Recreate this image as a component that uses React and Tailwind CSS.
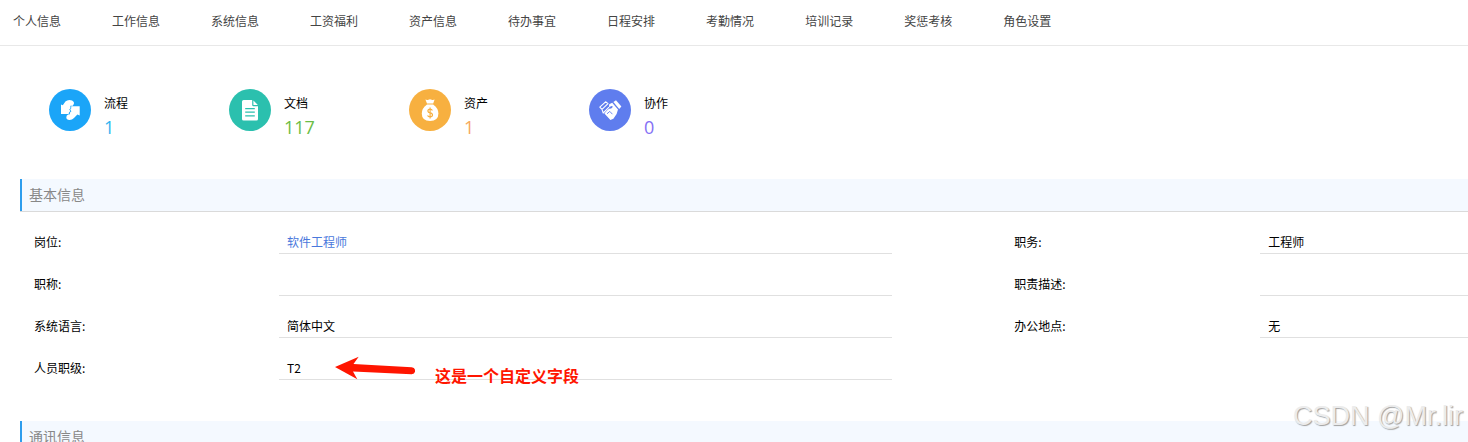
import React from 'react';

const navItems = [
  '个人信息',
  '工作信息',
  '系统信息',
  '工资福利',
  '资产信息',
  '待办事宜',
  '日程安排',
  '考勤情况',
  '培训记录',
  '奖惩考核',
  '角色设置',
];

const ProcessIcon = () => (
  <svg viewBox="0 0 42 42" className="size-full" fill="#fff">
    <path d="M12 25V15.6L13.8 16.2L16.4 12.6Q18 11 20.4 11Q23.6 11 24.8 13Q25.6 14.8 23.8 16.8L21.4 16.8V19.4L20.2 20.6L21.4 22L20 23.4L19.6 25Z" />
    <path d="M22.2 17.2H30.7V26.4L28.4 25.4L25 29Q23 31.1 20.4 31Q17.4 30.8 17.3 28.2Q17.4 26.4 19.2 25.6L21 25.2L20.8 23.8L22.4 22.2L21.2 20.6L22.2 19.6Z" />
  </svg>
);

const DocumentIcon = () => (
  <svg viewBox="0 0 42 42" className="size-full">
    <path d="M14.6 11H23.2V16Q23.2 17.2 24.4 17.2H29V30Q29 31.6 27.4 31.6H14.6Q13 31.6 13 30V12.6Q13 11 14.6 11Z" fill="#fff" />
    <path d="M24.4 11.4L28.8 16H24.4Z" fill="#fff" />
    <path d="M16.2 19.6H25.8M16.2 23.2H25.8M16.2 26.8H25.8" stroke="#2bc0ae" strokeWidth="1.2" />
  </svg>
);

const MoneyBagIcon = () => (
  <svg viewBox="0 0 42 42" className="size-full">
    <path d="M16.4 10.6Q18 11.4 19.4 10.7Q21 9.9 22.6 10.7Q24 11.4 25.6 10.6L24.2 14.6H18Z" fill="#fff" />
    <path d="M18 15.6H24.2Q29.4 19.4 29.4 24.6Q29.4 32 21 32Q12.8 32 12.8 24.6Q12.8 19.4 18 15.6Z" fill="#fff" />
    <path d="M23.4 21.4Q22.8 20.2 21.1 20.2Q18.9 20.3 18.9 22.1Q19 23.5 21.1 23.9Q23.5 24.3 23.5 26Q23.4 27.8 21.1 27.9Q19 27.8 18.6 26.3M21.1 18.6V29.4" stroke="#f7b040" strokeWidth="1.2" fill="none" />
  </svg>
);

const HandshakeIcon = () => (
  <svg viewBox="0 0 42 42" className="size-full">
    <path d="M10.8 18.2L16.6 12.8L19 14.6L13 20.4Z" fill="none" stroke="#fff" strokeWidth="1.1" strokeLinejoin="round" />
    <path d="M13.2 20.8L14.2 24L20 18.2" fill="none" stroke="#fff" strokeWidth="1.1" strokeLinejoin="round" />
    <path d="M24.4 13L27 11.2L32.4 17.6L30.2 20Z" fill="#fff" />
    <path d="M20.2 15.2L23.2 13.8L29 20.6L27.6 25L24.4 29.8L21.4 31L15.4 24.6L18 21.4L20 19.8L22.2 19.6L24 17.8L22.6 17L20 18.2Z" fill="#fff" />
    <path d="M18 24.8L20.8 22.4L23.4 25.2" fill="none" stroke="#5f7dee" strokeWidth="0.9" />
  </svg>
);

const stats = [
  { label: '流程', value: 1, icon: ProcessIcon, bg: 'bg-[#1ba5f8]', color: 'text-[#33b5ef]' },
  { label: '文档', value: 117, icon: DocumentIcon, bg: 'bg-[#2bc0ae]', color: 'text-[#6cbd45]' },
  { label: '资产', value: 1, icon: MoneyBagIcon, bg: 'bg-[#f7b040]', color: 'text-[#f7a95c]' },
  { label: '协作', value: 0, icon: HandshakeIcon, bg: 'bg-[#5f7dee]', color: 'text-[#8470f5]' },
];

const SectionTitle = ({ children }) => (
  <h2 className="h-[33px] border-b border-b-[#dadada] bg-[#f4f9ff] text-sm text-[#888]">
    <span className="flex h-8 items-center border-l-2 border-[#2d9ded] pb-0.5 pl-[7px]">{children}</span>
  </h2>
);

const Label = ({ children }) => (
  <dt className="flex h-[42px] items-end pb-[3px]">{children}</dt>
);

const Value = ({ children }) => (
  <dd className="relative flex h-[42px] items-end border-b border-[#e0e0e0] pb-0.5 pl-2">{children}</dd>
);

const Note = () => (
  <>
    <svg viewBox="0 0 80 24" className="absolute top-[18px] left-14 h-6 w-20" fill="#ff1500">
      <path d="M0 11L23.7 0.7L18.5 8L76.7 11.3A3.5 3.5 0 0 1 76.5 18.3L18 15.6L22.3 23.3Z" />
    </svg>
    <span className="absolute top-[25px] left-[156px] text-base font-bold whitespace-nowrap text-[#ff1500]">
      这是一个自定义字段
    </span>
  </>
);

const App = () => {
  return (
    <div className="relative h-screen overflow-hidden bg-white font-['Noto_Sans_CJK_SC',sans-serif] text-xs leading-[18px] text-black">
      <nav className="flex gap-[51px] border-b border-[#e8e8e8] pt-3 pb-[15px] pl-[13px] text-[#444]">
        {navItems.map((item) => (
          <a key={item} href="#" className="whitespace-nowrap">
            {item}
          </a>
        ))}
      </nav>

      <div className="flex pt-[43px] pb-12 pl-[49px]">
        {stats.map(({ label, value, icon: Icon, bg, color }) => (
          <div key={label} className="flex w-[180px] gap-[13px]">
            <div className={`size-[42px] rounded-full ${bg}`}>
              <Icon />
            </div>
            <div className="h-[42px] pt-[5px]">
              <div>{label}</div>
              <div className={`font-['Open_Sans',sans-serif] text-lg leading-[30px] ${color}`}>{value}</div>
            </div>
          </div>
        ))}
      </div>

      <main className="pl-5">
        <section className="pb-[41px]">
          <SectionTitle>基本信息</SectionTitle>
          <dl className="grid grid-cols-[245px_minmax(0,59fr)_122px_246px_minmax(0,20fr)] pl-[14px]">
            <Label>岗位:</Label>
            <Value>
              <a href="#" className="text-[#4a78dc]">软件工程师</a>
            </Value>
            <div />
            <Label>职务:</Label>
            <Value>工程师</Value>

            <Label>职称:</Label>
            <Value />
            <div />
            <Label>职责描述:</Label>
            <Value />

            <Label>系统语言:</Label>
            <Value>简体中文</Value>
            <div />
            <Label>办公地点:</Label>
            <Value>无</Value>

            <Label>人员职级:</Label>
            <Value>
              T2
              <Note />
            </Value>
          </dl>
        </section>

        <section>
          <SectionTitle>通讯信息</SectionTitle>
        </section>
      </main>

      {/* Watermark */}
      <div className="absolute right-[5px] bottom-2 font-['Liberation_Sans',sans-serif] text-[27px] leading-9 text-[#ececec] [text-shadow:1px_1px_1px_#a0a0a0]">
        CSDN @Mr.lir
      </div>
    </div>
  );
};

export default App;
